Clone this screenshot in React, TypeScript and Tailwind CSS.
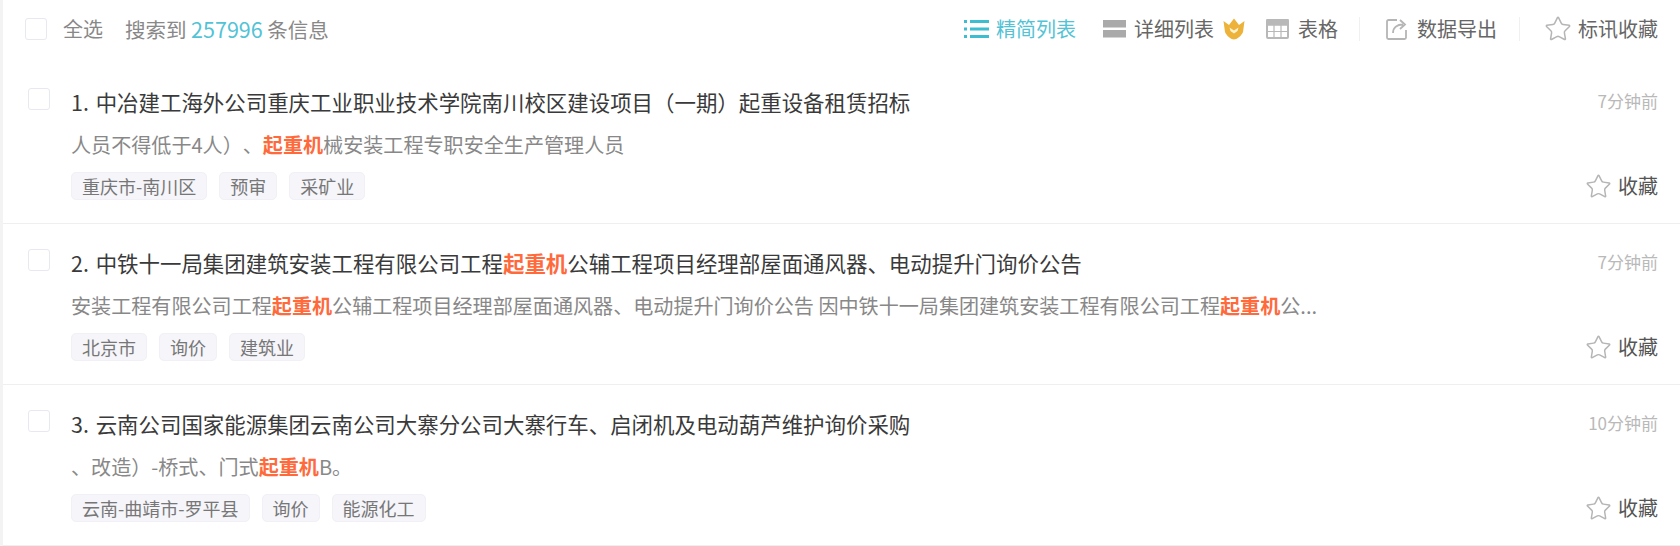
import { Star } from "lucide-react";

const font = "font-['Noto_Sans_CJK_SC','Noto_Sans',sans-serif] [text-spacing-trim:space-all]";

const Checkbox = () => (
  <span className="block w-[22px] h-[22px] shrink-0 rounded-[3px] border border-[#e8e8f0] bg-white" />
);

const Hit = ({ children }: { children: React.ReactNode }) => (
  <span className="font-bold text-[#ff6a3c]">{children}</span>
);

const Tag = ({ label }: { label: string }) => (
  <span className="flex items-center h-[28px] px-[10px] rounded-[5px] bg-[#f5f5fa] border border-[#f0f0f6] text-[18px] text-[#777]">
    {label}
  </span>
);

const ListIcon = () => (
  <svg width="26" height="20" viewBox="0 0 26 20" className="text-[#3dbdd0]">
    <rect x="0" y="1" width="3" height="3" fill="currentColor" />
    <rect x="0" y="8.500" width="3" height="3" fill="currentColor" />
    <rect x="0" y="16" width="3" height="3" fill="currentColor" />
    <rect x="6" y="1" width="19" height="3" fill="currentColor" />
    <rect x="6" y="8.500" width="19" height="3" fill="currentColor" />
    <rect x="6" y="16" width="19" height="3" fill="currentColor" />
  </svg>
);

const DetailIcon = () => (
  <svg width="24" height="20" viewBox="0 0 24 20">
    <rect x="0" y="1" width="23" height="7.500" fill="#aaa" />
    <rect x="0" y="11" width="23" height="7.500" fill="#aaa" />
  </svg>
);

const CrownIcon = () => (
  <svg width="24" height="22" viewBox="0 0 24 22">
    <path d="M1.500 3 L7 7 L12 0.500 L17 7 L22.500 3 L21 14 C19.500 18 14.500 21.500 12 21.500 C9.500 21.500 4.500 18 3 14 Z" fill="#ecb23a" />
    <path d="M7.500 9.500 L12 12.500 L16.500 9.500 L15.500 13 L12 15.500 L8.500 13 Z" fill="#fff3cf" />
  </svg>
);

const TableIcon = () => (
  <svg width="24" height="22" viewBox="0 0 24 22" fill="none" stroke="#b8b8b8" strokeWidth="1.500">
    <rect x="1" y="2" width="21" height="18" rx="1" strokeWidth="2" />
    <rect x="1" y="2" width="21" height="5" fill="#b8b8b8" />
    <path d="M1 13.500H22M8 7V20M15 7V20" strokeWidth="1.200" />
  </svg>
);

const ExportIcon = () => (
  <svg width="24" height="24" viewBox="0 0 24 24" fill="none" stroke="#b5b5b5" strokeWidth="1.800">
    <path d="M12 3H3.500A1.500 1.500 0 0 0 2 4.500V20.500A1.500 1.500 0 0 0 3.500 22H19.500A1.500 1.500 0 0 0 21 20.500V13" />
    <path d="M8 16C8 10.500 12 7.500 18 7.500M15 3L20 7.500L15 12" />
  </svg>
);

const HeaderAction = ({
  icon,
  label,
  active,
  gap,
}: {
  icon: React.ReactNode;
  label: string;
  active?: boolean;
  gap?: string;
}) => (
  <span className={`flex items-center ${gap ?? "gap-[6px]"} text-[20px] ${active ? "text-[#52c3d6]" : "text-[#666]"}`}>
    {icon}
    {label}
  </span>
);

const Row = ({
  title,
  desc,
  tags,
  time,
}: {
  title: React.ReactNode;
  desc: React.ReactNode;
  tags: string[];
  time: string;
}) => (
  <div className="flex h-[161px] border-b border-[#efefef] pl-[25px] pr-[22px]">
    <div className="pt-[25px]">
      <Checkbox />
    </div>
    <div className="flex-1 ml-[21px] min-w-0">
      <div className="flex items-start justify-between h-[32px] mt-[23px]">
        <h3 className="text-[21.450px] leading-[32px] [word-spacing:2px] font-normal text-[#3a3a3a] whitespace-nowrap">
          {title}
        </h3>
        <span className="text-[17px] leading-[30px] text-[#b9b9b9]">{time}</span>
      </div>
      <p className="mt-[12px] h-[30px] leading-[30px] text-[20.080px] text-[#888] whitespace-nowrap">{desc}</p>
      <div className="flex items-center justify-between mt-[11px]">
        <div className="flex gap-[12px]">
          {tags.map((t) => (
            <Tag key={t} label={t} />
          ))}
        </div>
        <span className="flex items-center gap-[6px] text-[20px] text-[#555]">
          <Star size={27} strokeWidth={1.300} className="text-[#b5b5b5]" />
          收藏
        </span>
      </div>
    </div>
  </div>
);

const App = () => {
  return (
    <div className={`${font} w-[1680px] h-[546px] bg-white border-l-[3px] border-[#f3f3f3] overflow-hidden`}>
      <div className="flex items-center justify-between h-[58px] pl-[22px] pr-[22px]">
        <div className="flex items-center">
          <Checkbox />
          <span className="ml-[16px] text-[20px] text-[#888]">全选</span>
          <span className="ml-[22px] text-[20.500px] text-[#888]">
            搜索到 <span className="text-[21.500px] text-[#52c3d6]">257996</span> 条信息
          </span>
        </div>
        <div className="flex items-center">
          <HeaderAction active icon={<ListIcon />} label="精简列表" />
          <span className="ml-[27px]">
            <HeaderAction gap="gap-[7px]" icon={<DetailIcon />} label="详细列表" />
          </span>
          <span className="ml-[8px]">
            <CrownIcon />
          </span>
          <span className="ml-[20px]">
            <HeaderAction gap="gap-[8px]" icon={<TableIcon />} label="表格" />
          </span>
          <span className="ml-[21px] mr-[25px] w-px h-[24px] bg-[#f0f0f0]" />
          <HeaderAction gap="gap-[8px]" icon={<ExportIcon />} label="数据导出" />
          <span className="ml-[22px] mr-[24px] w-px h-[24px] bg-[#f0f0f0]" />
          <HeaderAction icon={<Star size={28} strokeWidth={1.300} className="text-[#b5b5b5]" />} label="标讯收藏" />
        </div>
      </div>
      <div className="h-[5px]" />
      <Row
        title="1. 中冶建工海外公司重庆工业职业技术学院南川校区建设项目（一期）起重设备租赁招标"
        desc={
          <>
            人员不得低于4人）、<Hit>起重机</Hit>械安装工程专职安全生产管理人员
          </>
        }
        tags={["重庆市-南川区", "预审", "采矿业"]}
        time="7分钟前"
      />
      <Row
        title={
          <>
            2. 中铁十一局集团建筑安装工程有限公司工程<Hit>起重机</Hit>公辅工程项目经理部屋面通风器、电动提升门询价公告
          </>
        }
        desc={
          <>
            安装工程有限公司工程<Hit>起重机</Hit>公辅工程项目经理部屋面通风器、电动提升门询价公告 因中铁十一局集团建筑安装工程有限公司工程<Hit>起重机</Hit>公...
          </>
        }
        tags={["北京市", "询价", "建筑业"]}
        time="7分钟前"
      />
      <Row
        title="3. 云南公司国家能源集团云南公司大寨分公司大寨行车、启闭机及电动葫芦维护询价采购"
        desc={
          <>
            、改造）-桥式、门式<Hit>起重机</Hit>B。
          </>
        }
        tags={["云南-曲靖市-罗平县", "询价", "能源化工"]}
        time="10分钟前"
      />
    </div>
  );
};

export default App;
